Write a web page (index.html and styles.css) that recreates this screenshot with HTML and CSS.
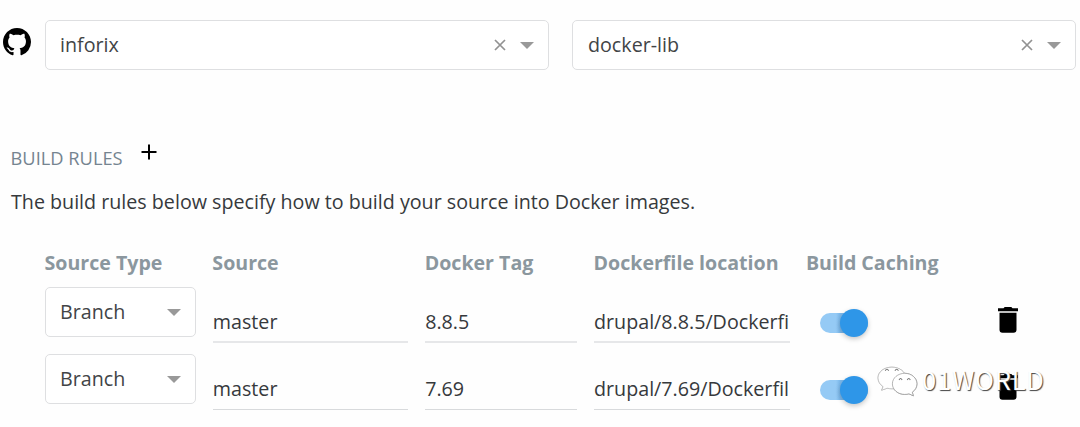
FILE: index.html
```html
<!DOCTYPE html>
<html lang="en">
<head>
<meta charset="utf-8">
<title>Build rules</title>
<link rel="stylesheet" href="styles.css">
</head>
<body>
<main class="page">
  <section class="repo">
    <svg class="github" viewBox="0 0 16 16"><path d="M8 0C3.58 0 0 3.58 0 8c0 3.54 2.29 6.53 5.47 7.59.4.07.55-.17.55-.38 0-.19-.01-.82-.01-1.49-2.01.37-2.53-.49-2.69-.94-.09-.23-.48-.94-.82-1.13-.28-.15-.68-.52-.01-.53.63-.01 1.08.58 1.23.82.72 1.21 1.87.87 2.33.66.07-.52.28-.87.51-1.07-1.78-.2-3.64-.89-3.64-3.95 0-.87.31-1.59.82-2.15-.08-.2-.36-1.02.08-2.12 0 0 .67-.21 2.2.82.64-.18 1.32-.27 2-.27s1.36.09 2 .27c1.53-1.04 2.2-.82 2.2-.82.44 1.1.16 1.92.08 2.12.51.56.82 1.27.82 2.15 0 3.07-1.87 3.75-3.65 3.95.29.25.54.73.54 1.48 0 1.07-.01 1.93-.01 2.2 0 .21.15.46.55.38A8.01 8.01 0 0 0 16 8c0-4.42-3.58-8-8-8z"/></svg>
    <div class="select">
      <span class="value">inforix</span>
      <svg class="clear" viewBox="0 0 12 12"><path d="M1 1l10 10M11 1L1 11"/></svg>
      <svg class="arrow" viewBox="0 0 14 7"><path d="M0 0h14L7 7z"/></svg>
    </div>
    <div class="select">
      <span class="value">docker-lib</span>
      <svg class="clear" viewBox="0 0 12 12"><path d="M1 1l10 10M11 1L1 11"/></svg>
      <svg class="arrow" viewBox="0 0 14 7"><path d="M0 0h14L7 7z"/></svg>
    </div>
  </section>
  <header class="title">
    <h2>BUILD RULES</h2>
    <svg class="plus" viewBox="0 0 16 16"><path d="M8 .5v15M.5 8h15"/></svg>
  </header>
  <p class="intro">The build rules below specify how to build your source into Docker images.</p>
  <section class="rules">
    <div class="row head">
      <span>Source Type</span><span>Source</span><span>Docker Tag</span><span>Dockerfile location</span><span>Build Caching</span>
    </div>
    <div class="row">
      <div class="select"><span class="value">Branch</span><svg class="arrow" viewBox="0 0 14 7"><path d="M0 0h14L7 7z"/></svg></div>
      <div class="field">master</div>
      <div class="field">8.8.5</div>
      <div class="field">drupal/8.8.5/Dockerfi</div>
      <div class="toggle"><span class="knob"></span></div>
      <svg class="trash" viewBox="0 0 20 26"><path d="M5.500 1.200 6.700 0h6.600l1.200 1.200H20v3H0v-3zM1.500 5.800h17v17a3 3 0 0 1-3 3h-11a3 3 0 0 1-3-3z"/></svg>
    </div>
    <div class="row">
      <div class="select"><span class="value">Branch</span><svg class="arrow" viewBox="0 0 14 7"><path d="M0 0h14L7 7z"/></svg></div>
      <div class="field thin">master</div>
      <div class="field thin">7.69</div>
      <div class="field thin">drupal/7.69/Dockerfil</div>
      <div class="toggle"><span class="knob"></span></div>
      <svg class="trash" viewBox="0 0 20 26"><path d="M5.500 1.200 6.700 0h6.600l1.200 1.200H20v3H0v-3zM1.500 5.800h17v17a3 3 0 0 1-3 3h-11a3 3 0 0 1-3-3z"/></svg>
    </div>
  </section>
  <div class="watermark">
    <svg class="wechat" viewBox="0 0 40 30">
      <path class="bubble" d="M14.500 1C7 1 1 5.500 1 11.500c0 3.500 2 6.500 5 8.500L4.500 23.500l5.500-2c1.500.4 3 .6 4.500.6C22 22.100 28 17.500 28 11.500S22 1 14.500 1z"/>
      <path class="bubble" d="M27 7c-6.600 0-12 4.600-12 10.300s5.400 10.300 12 10.300c1.500 0 2.900-.2 4.200-.6l4.300 2-1.100-3.600c2.800-1.900 4.600-4.800 4.600-8.100C39 11.600 33.600 7 27 7z"/>
      <path class="eye" d="M8 4.500q1.700-3 3.400 0M17.500 4.500q1.700-3 3.400 0M21.500 13.500q1.500-2.700 3 0M29.500 13.500q1.500-2.700 3 0"/>
    </svg>
    <span>01WORLD</span>
  </div>
</main>
</body>
</html>
```
FILE: styles.css
```css
* { box-sizing: border-box; }
body { margin: 0; background: #fefefe; color: #36393c; font-family: "Open Sans", sans-serif; font-size: 19.68px; }
.page { position: relative; height: 427px; padding: 20px 4px 0 3px; overflow: hidden; }
svg { display: block; flex: none; }
.repo { display: flex; }
.repo .github { width: 28px; height: 28px; margin-top: 8px; }
.repo .select { width: 504px; flex: none; }
.repo .github + .select { margin: 0 23px 0 14px; }
.select { display: flex; align-items: center; height: 50px; padding: 0 14px; border: 1px solid #dedfe1; border-radius: 5px; background: #fff; }
.value { flex: 1; padding-bottom: 2px; color: #424446; }
.repo .select:last-child .value { padding-left: 1px; }
.clear { width: 12px; height: 12px; margin-right: 14px; fill: none; stroke: #929292; stroke-width: 1.7; }
.arrow { width: 14px; height: 7px; fill: #999; }
.title { display: flex; margin: 74px 0 0 7.500px; height: 28px; }
.title h2 { margin: -0.500px 0 0; font-size: 18.3px; font-weight: 400; line-height: 28px; color: #758490; }
.plus { width: 16px; height: 16px; margin: 0 0 0 18px; fill: none; stroke: #000; stroke-width: 2; }
.intro { margin: 16px 0 0 8px; line-height: 28px; }
.rules { margin: 32px 0 0 42px; }
.row { display: grid; grid-template-columns: 151px 195.500px 152px 195.500px 175px 20px; column-gap: 16.850px; height: 67.400px; align-items: start; }
.row.head { height: 39px; margin-left: -0.500px; font-weight: 700; font-size: 19.6px; line-height: 30px; color: #8b979e; white-space: nowrap; }
.field { height: 55.500px; padding-top: 21px; line-height: 28px; border-bottom: 2px solid #e6e7e9; white-space: nowrap; }
.field.thin { border-bottom: 1px solid #d8dadc; }
.toggle { display: flex; justify-content: flex-end; align-items: center; width: 48px; height: 20px; margin: 26px 0 0 13.500px; border-radius: 10px; background: linear-gradient(90deg, #95caf5 16px, #7bb8eb 20px); }
.knob { width: 28px; height: 28px; border-radius: 50%; background: #2e96e8; box-shadow: 0 2px 5px rgba(0,0,0,.22); }
.trash { width: 20px; height: 26px; margin: 20px 0 0; }
.watermark { position: absolute; left: 877px; top: 366px; display: flex; gap: 4px; color: #fff; font: 400 25.5px/26px "Noto Sans CJK SC", sans-serif; letter-spacing: .8px; text-shadow: 1px 1px 1px #444; }
.wechat { width: 41px; height: 31px; filter: drop-shadow(.5px .7px .5px #999); }
.bubble { fill: #fff; stroke: #bbb; stroke-width: .6; }
.bubble + .bubble { stroke: #999; stroke-width: .7; }
.eye { fill: none; stroke: #777; stroke-width: 1; }
```
